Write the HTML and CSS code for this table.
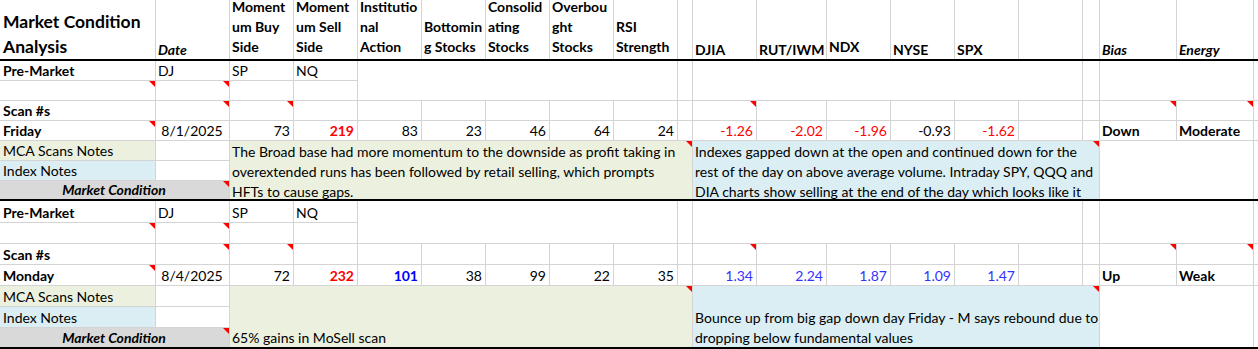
FILE: index.html
```html
<!DOCTYPE html>
<html>
<head>
<meta charset="utf-8">
<link rel="stylesheet" href="styles.css">
</head>
<body>
<div class="sheet">
  <div class="grid head">
    <div class="c title"><span>Market Condition<br>Analysis</span></div>
    <div class="c hi"><span>Date</span></div>
    <div class="c hw"><span>Moment<br>um Buy<br>Side</span></div>
    <div class="c hw"><span>Moment<br>um Sell<br>Side</span></div>
    <div class="c hw"><span>Institutio<br>nal<br>Action</span></div>
    <div class="c hw"><span>Bottomin<br>g Stocks</span></div>
    <div class="c hw"><span>Consolid<br>ating<br>Stocks</span></div>
    <div class="c hw"><span>Overbou<br>ght<br>Stocks</span></div>
    <div class="c hw"><span>RSI<br>Strength</span></div>
    <div class="c"></div>
    <div class="c hs"><span>DJIA</span></div>
    <div class="c hs"><span>RUT/IWM</span></div>
    <div class="c hw"><span>NDX</span></div>
    <div class="c hs"><span>NYSE</span></div>
    <div class="c hs"><span>SPX</span></div>
    <div class="c"></div>
    <div class="c"></div>
    <div class="c hi"><span>Bias</span></div>
    <div class="c hi"><span>Energy</span></div>
    <div class="c"></div>
  </div>

  <div class="grid block b1">
    <div class="c b pl"><span>Pre-Market</span></div>
    <div class="c"><span>DJ</span></div>
    <div class="c"><span>SP</span></div>
    <div class="c"><span>NQ</span></div>
    <div class="c span-ei r2"></div>
    <div class="c r2"></div>
    <div class="c span-kp r2"></div>
    <div class="c r2"></div>
    <div class="c span-rs r2"></div>
    <div class="c r2"></div>

    <div class="c cm"></div>
    <div class="c cm"></div>
    <div class="c"></div>
    <div class="c"></div>

    <div class="c b pl"><span>Scan #s</span></div>
    <div class="c cm"></div>
    <div class="c cm"></div>
    <div class="c"></div>
    <div class="c"></div>
    <div class="c"></div>
    <div class="c"></div>
    <div class="c"></div>
    <div class="c"></div>
    <div class="c"></div>
    <div class="c cm"></div>
    <div class="c"></div>
    <div class="c"></div>
    <div class="c"></div>
    <div class="c"></div>
    <div class="c"></div>
    <div class="c"></div>
    <div class="c cm"></div>
    <div class="c cm"></div>
    <div class="c"></div>

    <div class="c b pl cm"><span>Friday</span></div>
    <div class="c ctr"><span>8/1/2025</span></div>
    <div class="c num"><span>73</span></div>
    <div class="c num b red"><span>219</span></div>
    <div class="c num"><span>83</span></div>
    <div class="c num"><span>23</span></div>
    <div class="c num"><span>46</span></div>
    <div class="c num"><span>64</span></div>
    <div class="c num"><span>24</span></div>
    <div class="c"></div>
    <div class="c num red"><span>-1.26</span></div>
    <div class="c num red"><span>-2.02</span></div>
    <div class="c num red"><span>-1.96</span></div>
    <div class="c num"><span>-0.93</span></div>
    <div class="c num red"><span>-1.62</span></div>
    <div class="c"></div>
    <div class="c"></div>
    <div class="c b"><span>Down</span></div>
    <div class="c b"><span>Moderate</span></div>
    <div class="c"></div>

    <div class="c green pl"><span>MCA Scans Notes</span></div>
    <div class="c"></div>
    <div class="c span-cj r3 green note top cm"><span>The Broad base had more momentum to the downside as profit taking in<br>overextended runs has been followed by retail selling, which prompts<br>HFTs to cause gaps.</span></div>
    <div class="c span-kq r3 blue note top cm"><span>Indexes gapped down at the open and continued down for the<br>rest of the day on above average volume. Intraday SPY, QQQ and<br>DIA charts show selling at the end of the day which looks like it</span></div>
    <div class="c span-rs r3"></div>
    <div class="c r3"></div>

    <div class="c blue pl"><span>Index Notes</span></div>
    <div class="c"></div>

    <div class="c span-ab gray b i ctr cm"><span>Market Condition</span></div>
  </div>

  <div class="grid block b2">
    <div class="c b pl"><span>Pre-Market</span></div>
    <div class="c"><span>DJ</span></div>
    <div class="c"><span>SP</span></div>
    <div class="c"><span>NQ</span></div>
    <div class="c span-ei r2"></div>
    <div class="c r2"></div>
    <div class="c span-kp r2"></div>
    <div class="c r2"></div>
    <div class="c span-rs r2"></div>
    <div class="c r2"></div>

    <div class="c cm"></div>
    <div class="c cm"></div>
    <div class="c"></div>
    <div class="c"></div>

    <div class="c b pl"><span>Scan #s</span></div>
    <div class="c cm"></div>
    <div class="c cm"></div>
    <div class="c"></div>
    <div class="c"></div>
    <div class="c"></div>
    <div class="c"></div>
    <div class="c"></div>
    <div class="c"></div>
    <div class="c"></div>
    <div class="c cm"></div>
    <div class="c"></div>
    <div class="c"></div>
    <div class="c"></div>
    <div class="c"></div>
    <div class="c"></div>
    <div class="c"></div>
    <div class="c cm"></div>
    <div class="c cm"></div>
    <div class="c"></div>

    <div class="c b pl cm"><span>Monday</span></div>
    <div class="c ctr"><span>8/4/2025</span></div>
    <div class="c num"><span>72</span></div>
    <div class="c num b red"><span>232</span></div>
    <div class="c num b bl"><span>101</span></div>
    <div class="c num"><span>38</span></div>
    <div class="c num"><span>99</span></div>
    <div class="c num"><span>22</span></div>
    <div class="c num"><span>35</span></div>
    <div class="c"></div>
    <div class="c num bl2"><span>1.34</span></div>
    <div class="c num bl2"><span>2.24</span></div>
    <div class="c num bl2"><span>1.87</span></div>
    <div class="c num bl2"><span>1.09</span></div>
    <div class="c num bl2"><span>1.47</span></div>
    <div class="c"></div>
    <div class="c"></div>
    <div class="c b"><span>Up</span></div>
    <div class="c b"><span>Weak</span></div>
    <div class="c"></div>

    <div class="c green pl"><span>MCA Scans Notes</span></div>
    <div class="c"></div>
    <div class="c span-cj r3 green note bot cm"><span>65% gains in MoSell scan</span></div>
    <div class="c span-kq r3 blue note bot cm"><span>Bounce up from big gap down day Friday - M says rebound due to<br>dropping below fundamental values</span></div>
    <div class="c span-rs r3"></div>
    <div class="c r3"></div>

    <div class="c blue pl"><span>Index Notes</span></div>
    <div class="c"></div>

    <div class="c span-ab gray b i ctr cm"><span>Market Condition</span></div>
  </div>
</div>
</body>
</html>
```
FILE: styles.css
```css
html, body {
  margin: 0;
  padding: 0;
  background: #ffffff;
}

body {
  font-family: Lato, "Liberation Sans", sans-serif;
  font-size: 14px;
  color: #000000;
}

.sheet {
  width: 1258px;
  height: 349px;
  overflow: hidden;
}

.grid {
  display: grid;
  grid-template-columns: 155px 73px repeat(7, 63px) 14px 63px 69px repeat(4, 63px) 16px 76px 76px 1fr;
  column-gap: 1px;
  row-gap: 1px;
  background: #d4d4d4;
}

.head {
  grid-template-rows: 59px;
  border-bottom: 2px solid #000000;
}

.b1 {
  grid-template-rows: repeat(6, 19px) 18px;
  border-bottom: 2px solid #000000;
}

.b2 {
  grid-template-rows: 21px repeat(5, 20px) 19px;
  border-bottom: 2px solid #000000;
}

.c {
  position: relative;
  background: #ffffff;
  display: flex;
  align-items: flex-end;
  line-height: 18px;
  padding: 0 3px 0 2px;
  white-space: nowrap;
  overflow: hidden;
  min-width: 0;
}

.c > span {
  display: block;
}

.pl { padding-left: 3px; }

.head .c { font-weight: 700; }
.title { font-size: 17.5px; line-height: 25px; padding-bottom: 0; padding-left: 3px; }
.hw { line-height: 20px; padding-bottom: 2px; }
.hs { padding-bottom: 0; }
.hi { font-style: italic; }

.b { font-weight: 700; }
.i { font-style: italic; }
.num { justify-content: flex-end; }
.ctr { justify-content: center; }
.red { color: #ff0000; }
.bl { color: #0000ff; }
.bl2 { color: #3333ff; }

.green { background: #ebf1de; }
.blue { background: #daeef3; }
.gray { background: #d9d9d9; }

.note { padding-left: 2px; line-height: 20px; }
.top { align-items: flex-start; padding-top: 1px; }
.bot > span { margin-bottom: -1px; }

.span-ab { grid-column: span 2; }
.span-ei { grid-column: span 5; }
.span-cj { grid-column: span 8; }
.span-kp { grid-column: span 6; }
.span-kq { grid-column: span 7; }
.span-rs { grid-column: span 2; }
.r2 { grid-row: span 2; }
.r3 { grid-row: span 3; }

.cm::after {
  content: "";
  position: absolute;
  top: 0;
  right: 0;
  width: 0;
  height: 0;
  border-style: solid;
  border-width: 0 6px 6px 0;
  border-color: transparent #ff0000 transparent transparent;
}
```
